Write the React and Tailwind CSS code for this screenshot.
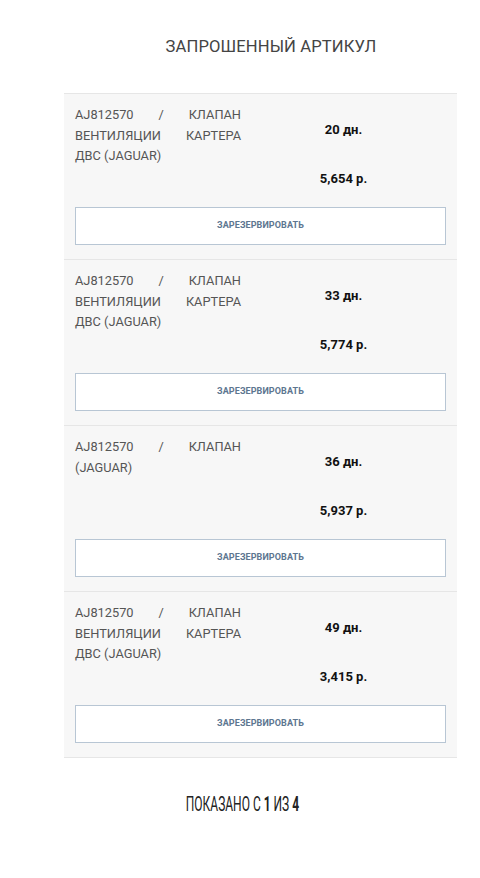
import React from "react";

const items = [
  { name: "AJ812570 / КЛАПАН ВЕНТИЛЯЦИИ КАРТЕРА ДВС (JAGUAR)", days: "20 дн.", price: "5,654 р." },
  { name: "AJ812570 / КЛАПАН ВЕНТИЛЯЦИИ КАРТЕРА ДВС (JAGUAR)", days: "33 дн.", price: "5,774 р." },
  { name: "AJ812570 / КЛАПАН (JAGUAR)", days: "36 дн.", price: "5,937 р." },
  { name: "AJ812570 / КЛАПАН ВЕНТИЛЯЦИИ КАРТЕРА ДВС (JAGUAR)", days: "49 дн.", price: "3,415 р." },
];

export default function App() {
  return (
    <div className="w-[480px] min-h-[878px] bg-white" style={{ fontFamily: "Roboto, 'Liberation Sans', sans-serif" }}>
      <div className="pt-[37px] pl-[62px] text-center text-[16.6px] leading-[20px] text-[#444] tracking-[0.1px]">
        ЗАПРОШЕННЫЙ АРТИКУЛ
      </div>
      <div className="mt-[36px] ml-[64px] w-[393px] border-t border-[#e6e6e6]">
        {items.map((it, i) => (
          <div key={i} className="bg-[#f7f7f7] border-b border-[#e6e6e6] px-[11px] pt-[11px] pb-[14px]">
            <div className="flex">
              <div className="w-[166px] text-justify text-[12.8px] leading-[20.5px] text-[#555]">
                {it.name}
              </div>
              <div className="flex-1 flex flex-col items-center pt-[17px]">
                <div className="text-[13px] leading-[16px] font-bold text-[#111]">{it.days}</div>
                <div className="mt-[33px] text-[13px] leading-[16px] font-bold text-[#111]">{it.price}</div>
              </div>
            </div>
            <div className="mt-[20px] h-[38px] border border-[#b8c6d4] bg-white flex items-center justify-center">
              <span className="text-[9px] font-bold text-[#5d7690] tracking-[0.1px]">ЗАРЕЗЕРВИРОВАТЬ</span>
            </div>
          </div>
        ))}
      </div>
      <div className="mt-[34px] flex justify-center pl-[5px]">
        <span className="inline-block origin-center scale-x-[0.6] whitespace-nowrap text-[20px] leading-[24px] text-[#222]">
          ПОКАЗАНО С <b className="font-bold">1</b> ИЗ <b className="font-bold">4</b>
        </span>
      </div>
    </div>
  );
}
